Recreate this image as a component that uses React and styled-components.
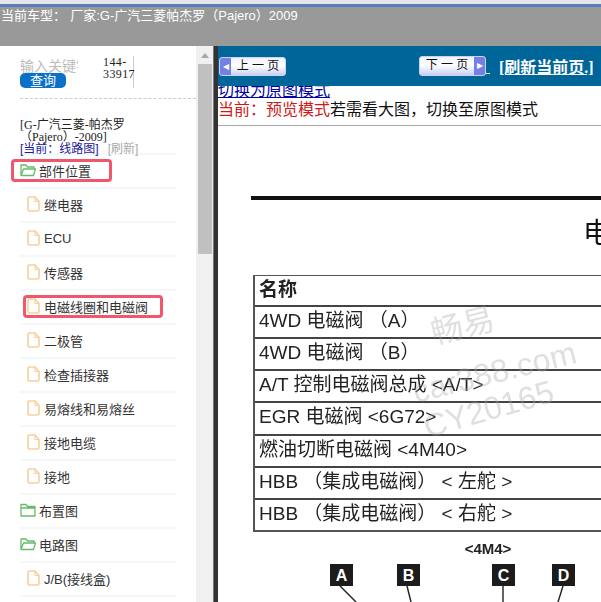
import React from 'react';
import styled, { createGlobalStyle } from 'styled-components';

const Global = createGlobalStyle`
  html, body { margin: 0; padding: 0; background: #fff; }
  body { font-family: "Liberation Sans", "Noto Sans CJK SC", sans-serif; }
  * { box-sizing: border-box; }
`;

const Page = styled.div`
  width: 601px; height: 602px; overflow: hidden;
  display: flex; flex-direction: column; position: relative;
`;
const Header = styled.header`
  height: 46px; flex: none; background: #999;
  border-top: 4px solid #e4e6ea;
  color: #fff; font-size: 13px; line-height: 16px;
  &::before { content: ""; display: block; height: 3px; background: #5a7dbd; }
`;
const HeaderText = styled.div`
  padding: 1px 0 0 1px; white-space: pre; word-spacing: -1.5px;
`;
const Body = styled.div`
  flex: 1; display: flex; min-height: 0;
`;
const Sidebar = styled.aside`
  width: 196px; flex: none; padding: 10px 20px 0 20px; overflow: hidden; background: #fff;
`;
const Search = styled.div`
  display: flex; height: 33px; padding-bottom: 0;
`;
const SearchLeft = styled.div`
  width: 83px; display: flex; flex-direction: column; align-items: flex-start;
`;
const Keyword = styled.div`
  width: 58px; height: 15px; margin-top: 2px; overflow: hidden; white-space: nowrap;
  font-size: 14px; line-height: 17px; color: #bbb;
`;
const Query = styled.button`
  width: 46px; height: 15px; border: 0; padding: 0; border-radius: 5px;
  background: #0a70c8; color: #fff; font: 13px/15px "Liberation Sans", "Noto Sans CJK SC", sans-serif;
`;
const Code = styled.div`
  width: 31px; height: 32px; border-right: 1px solid #ccc;
  font: 12px/12px "Liberation Serif", serif; color: #222; letter-spacing: 0.4px;
`;
const Dashed = styled.div`
  border-top: 1px dashed #ccc; margin: 9px -20px 0 0; height: 1px;
`;
const Title = styled.div`
  margin-top: 20px; font: 12px/12px "Liberation Serif", "Noto Sans CJK SC", serif; color: #222;
`;
const Current = styled.div`
  margin-top: -1px; font: 12px/14px "Liberation Sans", "Noto Sans CJK SC", sans-serif;
  color: #1a1a9c; display: flex; gap: 9px;
`;
const Refresh = styled.span`color: #aaa;`;
const Tree = styled.ul`
  list-style: none; margin: -3px 0 0; padding: 0; width: 156px;
  border-top: 2px solid #f6f7f9;
`;
const Row = styled.li`
  height: 34px; display: flex; align-items: center; position: relative;
  padding-left: ${p => (p.$folder ? 0 : 7)}px;
  gap: ${p => (p.$folder ? 3 : 4)}px;
  border-bottom: 2px solid #f6f7f9;
  color: #333; font-size: 13px; white-space: nowrap;
  padding-bottom: 2px;
`;
const Mark = styled.span`
  position: absolute; border: 3px solid #f0566c; border-radius: 4px;
  left: ${p => p.$left}px; width: ${p => p.$width}px; top: 4px; height: 23px;
`;
const Scrollbar = styled.div`
  width: 17px; flex: none; background: #f0f0f0; display: flex; flex-direction: column;
  align-items: center;
`;
const UpArrow = styled.div`
  height: 18px; flex: none; display: flex; align-items: center;
  &::before { content: ""; border: 4px solid transparent; border-top: 0; border-bottom: 5px solid #a6a6a6; }
`;
const Thumb = styled.div`
  width: 14px; height: 190px; background: #c0c0c0;
`;
const Divider = styled.div`
  width: 5px; flex: none; background: #333; border-left: 1px solid #777;
`;
const Main = styled.main`
  flex: 1; min-width: 0; overflow: hidden; position: relative; background: #fff;
  display: flex; flex-direction: column;
`;
const Toolbar = styled.div`
  height: 40px; flex: none; background: #006699; position: relative; z-index: 1;
  display: flex; align-items: center; padding: 0 6px 0 1px;
`;
const PageButton = styled.div`
  width: 67px; height: ${p => (p.$next ? 20 : 19)}px; display: flex; flex: none;
  flex-direction: ${p => (p.$next ? 'row-reverse' : 'row')};
  margin: ${p => (p.$next ? '-1px 0 0 133px' : '1px 0 0 0')};
  border: 1px solid #c9d4f2; border-radius: 3px; overflow: hidden;
  background: linear-gradient(#f0f2ff, #fff 45%, #c9cff0);
  color: #111; font-size: 12px; line-height: 17px;
`;
const Cap = styled.span`
  width: 11px; background: #7480e4; color: #fff; font-size: 12px; line-height: 16px; text-align: center; flex: none;
`;
const Label = styled.span`
  flex: 1; text-align: center; white-space: pre;
`;
const Under = styled.span`
  width: 4px; height: 12px; border-bottom: 1px solid #fff; margin: 4px 10px 0 0; flex: none;
`;
const RefreshLink = styled.a`
  color: #fff; font: bold 16px/18px "Liberation Serif", "Noto Sans CJK SC", serif;
  text-decoration: underline; white-space: nowrap; margin-top: 3px; margin-left: -1px;
`;
const Notes = styled.div`
  height: 44px; flex: none; margin-top: -4px;
  font-size: 16px; line-height: 20px; border-bottom: 1px solid #aaa; white-space: nowrap; color: #111;
`;
const SwitchLink = styled.a`
  display: block; color: #00a; text-decoration: underline; width: 111px; line-height: 17px; height: 18px;
`;
const Red = styled.span`color: #d01818;`;
const Doc = styled.div`
  flex: 1; padding: 70px 0 0 33px; filter: blur(0.35px); width: 500px; position: relative;
`;
const Rule = styled.div`
  height: 4px; background: #111;
`;
const BigTitle = styled.div`
  font-size: 28px; line-height: 34px; margin: 17px 0 0 332px; color: #111; height: 36px;
`;
const SpecTable = styled.div`
  margin: 22px 0 0 2px; border: 1px solid #555; border-bottom-width: 2px; border-left-width: 2px;
  display: flex; flex-direction: column; height: 257px;
`;
const SpecRow = styled.div`
  flex: ${p => (p.$head ? '0 0 29px' : '1 1 0')}; min-height: 0; padding: 0 0 2px 4px;
  color: #222; font-size: 19px; line-height: 28px; white-space: pre; overflow: hidden;
  font-weight: ${p => (p.$head ? 700 : 400)};
  & + & { border-top: 2px solid #444; }
`;
const Diagram = styled.svg`
  display: block; margin: 9px 0 0 2px;
`;
const Watermark = styled.span`
  position: absolute; color: rgba(165,165,165,.36); white-space: nowrap; z-index: 2;
  left: ${p => p.$x}px; top: ${p => p.$y}px; font-size: ${p => p.$size}px;
  transform: rotate(${p => p.$rot}deg);
`;

const FileIcon = () => (
  <svg width="13" height="16" viewBox="0 0 13 16" fill="none" style={{ flex: 'none' }}>
    <path d="M2.5 1H8l4 4.5V13.5a1.5 1.5 0 0 1-1.5 1.5h-8A1.5 1.5 0 0 1 1 13.5v-11A1.5 1.5 0 0 1 2.5 1Z" stroke="#f7d09c" strokeWidth="1.6" />
    <path d="M8 1v4.5h4" stroke="#f7d09c" strokeWidth="1.2" />
  </svg>
);
const FolderIcon = ({ open }) => (
  <svg width="16" height="14" viewBox="0 0 16 14" fill="none" style={{ flex: 'none' }}>
    {open ? (
      <path d="M1 12.5V2h5l1.5 2H14v2M1 12.5 3.5 6H15.5l-2 6.5H1Z" stroke="#66bb6a" strokeWidth="1.3" strokeLinejoin="round" />
    ) : (
      <path d="M1 13V1.5h5L7.5 3.5H15V13H1ZM1 5h14" stroke="#66bb6a" strokeWidth="1.3" strokeLinejoin="round" />
    )}
  </svg>
);

const items = [
  { t: '部件位置', folder: true, open: true, mark: [-9, 101] },
  { t: '继电器' }, { t: 'ECU' }, { t: '传感器' },
  { t: '电磁线圈和电磁阀', mark: [3, 140] },
  { t: '二极管' }, { t: '检查插接器' }, { t: '易熔线和易熔丝' }, { t: '接地电缆' }, { t: '接地' },
  { t: '布置图', folder: true }, { t: '电路图', folder: true, open: true }, { t: 'J/B(接线盒)' }, { t: '' },
];
const specs = ['4WD 电磁阀 （A）', '4WD 电磁阀 （B）', 'A/T 控制电磁阀总成 <A/T>', 'EGR 电磁阀 <6G72>', '燃油切断电磁阀 <4M40>', 'HBB （集成电磁阀） < 左舵 >', 'HBB （集成电磁阀） < 右舵 >'];

const boxes = [['A', 40, 'M50 22 L66 38'], ['B', 107, 'M117 22 L121 38'], ['C', 202, 'M213 22 V38'], ['D', 262, 'M273 22 L268 38']];

export default function App() {
  return (
    <Page>
      <Global />
      <Header><HeaderText>当前车型：  厂家:G-广汽三菱帕杰罗（Pajero）2009</HeaderText></Header>
      <Body>
        <Sidebar>
          <Search>
            <SearchLeft>
              <Keyword>输入关键字</Keyword>
              <Query>查询</Query>
            </SearchLeft>
            <Code>144-<br />33917</Code>
          </Search>
          <Dashed />
          <Title>[G-广汽三菱-帕杰罗<br />（Pajero）-2009]</Title>
          <Current><span>[当前：线路图]</span><Refresh>[刷新]</Refresh></Current>
          <Tree>
            {items.map((it, i) => (
              <Row key={i} $folder={it.folder}>
                {it.folder ? <FolderIcon open={it.open} /> : <FileIcon />}
                {it.t}
                {it.mark && <Mark $left={it.mark[0]} $width={it.mark[1]} />}
              </Row>
            ))}
          </Tree>
        </Sidebar>
        <Scrollbar><UpArrow /><Thumb /></Scrollbar>
        <Divider />
        <Main>
          <Toolbar>
            <PageButton><Cap>◂</Cap><Label>上 一 页</Label></PageButton>
            <PageButton $next><Cap>▸</Cap><Label>下 一 页</Label></PageButton>
            <Under />
            <RefreshLink>[刷新当前页.]</RefreshLink>
          </Toolbar>
          <Notes>
            <SwitchLink>切换为原图模式</SwitchLink>
            <Red>当前：预览模式</Red>若需看大图，切换至原图模式
          </Notes>
          <Doc>
            <Rule />
            <BigTitle>电</BigTitle>
            <SpecTable>
              <SpecRow $head>名称</SpecRow>
              {specs.map(s => <SpecRow key={s}>{s}</SpecRow>)}
            </SpecTable>
            <Diagram width="340" height="70" viewBox="0 0 340 70">
              <text x="235" y="13" fontFamily="Liberation Sans" fontSize="15" fontWeight="700" textAnchor="middle" fill="#222">&lt;4M4&gt;</text>
              <g transform="translate(0,23)">
                {boxes.map(([l, x, d]) => (
                  <g key={l}>
                    <rect x={x + 37} y="0" width="23" height="22" fill="#1c1c1c" />
                    <text x={x + 48.5} y="17" fontFamily="Liberation Sans" fontSize="16" fontWeight="700" textAnchor="middle" fill="#fff">{l}</text>
                    <path d={d} transform="translate(37,0)" stroke="#222" strokeWidth="1.4" fill="none" />
                  </g>
                ))}
              </g>
            </Diagram>
          </Doc>
          <Watermark $x={212} $y={254} $size={32} $rot={-14}>畅易</Watermark>
          <Watermark $x={193} $y={308} $size={32} $rot={-14}>car388.com</Watermark>
          <Watermark $x={204} $y={345} $size={32} $rot={-16}>CY20165</Watermark>
        </Main>
      </Body>
    </Page>
  );
}
